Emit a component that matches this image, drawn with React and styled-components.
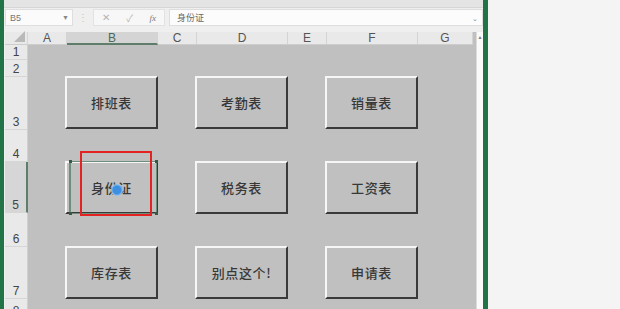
import React from "react";
import styled, { createGlobalStyle, css } from "styled-components";

const GlobalStyle = createGlobalStyle`
  html, body {
    margin: 0;
    padding: 0;
    background: #f4f4f4;
  }
`;

const Screen = styled.div`
  display: flex;
  width: 620px;
  height: 309px;
  overflow: hidden;
  background: #f4f4f4;
  font-family: "Liberation Sans", "Noto Sans CJK SC", sans-serif;
`;

const EdgeBar = styled.div`
  flex: none;
  width: ${(p) => p.$w}px;
  background: #227447;
`;

const Workbook = styled.div`
  flex: none;
  width: 479px;
  display: flex;
  flex-direction: column;
  overflow: hidden;
  background: #efefef;
`;

const TopStrip = styled.div`
  flex: none;
  height: 7px;
  background: #e4e4e4;
  border-bottom: 1px solid #d6d6d6;
`;

const FormulaBar = styled.div`
  flex: none;
  display: flex;
  align-items: stretch;
  height: 17px;
  margin: 1px 0 6px 1px;
  gap: 4px;
`;

const NameBox = styled.div`
  width: 59px;
  display: flex;
  align-items: center;
  justify-content: space-between;
  padding: 0 3px 0 4px;
  background: #fbfbfb;
  border: 1px solid #dedede;
  font-size: 9px;
  color: #777;
`;

const Caret = styled.span`
  font-size: 7px;
  color: #888;
`;

const Dots = styled.div`
  width: 12px;
  display: flex;
  align-items: center;
  justify-content: center;
  color: #c4c4c4;
  font-size: 10px;
`;

const ActionBox = styled.div`
  width: 70px;
  display: flex;
  align-items: center;
  justify-content: space-around;
  background: #f7f7f7;
  border: 1px solid #e2e2e2;
  color: #b4b4b4;
  font-size: 10px;
`;

const Fx = styled.span`
  font-family: "Liberation Serif", serif;
  font-style: italic;
  font-size: 9px;
  color: #777;
`;

const FormulaInput = styled.div`
  flex: 1;
  display: flex;
  align-items: center;
  justify-content: space-between;
  padding: 0 4px 0 7px;
  background: #fcfcfc;
  border: 1px solid #dedede;
  font-family: "Noto Sans CJK SC", sans-serif;
  font-size: 9px;
  color: #666;
`;

const SheetGrid = styled.div`
  flex: none;
  display: grid;
  margin-left: 1px;
  grid-template-columns: 23px 39px 91px 39px 91px 39px 91px 55px 10px;
  grid-template-rows: 13px 15px 17px 53px 32px 51px 34px 52px 20px;
  background: #c0c0c0;
`;

const Corner = styled.div`
  grid-column: 1;
  grid-row: 1;
  display: flex;
  align-items: flex-end;
  justify-content: flex-end;
  padding: 0 2px 2px 0;
  background: #e9e9e9;
  border-bottom: 1px solid #cdcdcd;
  border-right: 1px solid #d6d6d6;
`;

const ColHead = styled.div`
  grid-row: 1;
  grid-column: ${(p) => p.$col};
  display: flex;
  align-items: center;
  justify-content: center;
  font-size: 12px;
  color: #555;
  background: #e9e9e9;
  border-right: 1px solid #d4d4d4;
  border-bottom: 1px solid #cdcdcd;
  ${(p) =>
    p.$active &&
    css`
      background: #d4d4d4;
      color: #4a6b58;
      border-bottom: 2px solid #5e7d6b;
    `}
`;

const RowHead = styled.div`
  grid-column: 1;
  grid-row: ${(p) => p.$row};
  display: flex;
  align-items: flex-end;
  justify-content: center;
  font-size: 12px;
  line-height: 13px;
  color: #444;
  background: #e9e9e9;
  border-bottom: 1px solid #d6d6d6;
  border-right: 1px solid #cfcfcf;
  ${(p) =>
    p.$active &&
    css`
      background: #d6d6d6;
      border-right: 2px solid #5e7d6b;
    `}
`;

const ScrollTrack = styled.div`
  grid-column: 9;
  grid-row: 1 / -1;
  display: flex;
  justify-content: center;
  padding-top: 2px;
  margin-left: 3px;
  background: #fafafa;
  border-left: 1px solid #dcdcdc;
  font-size: 5px;
  color: #777;
`;

const ButtonSlot = styled.div`
  grid-column: ${(p) => p.$col};
  grid-row: ${(p) => p.$row};
  position: relative;
  margin: -1px 0 0 -2px;
  width: 93px;
  height: 53px;
`;

const SheetButton = styled.div`
  box-sizing: border-box;
  width: 100%;
  height: 100%;
  display: flex;
  align-items: center;
  justify-content: center;
  background: #c0c0c0;
  border-top: 2px solid #f6f6f6;
  border-left: 2px solid #f6f6f6;
  border-right: 2px solid #3a3a3a;
  border-bottom: 2px solid #3a3a3a;
  font-family: "Noto Sans CJK SC", sans-serif;
  font-size: 13px;
  font-weight: 500;
  color: #383838;
  letter-spacing: 0.6px;
`;

const SelectionFrame = styled.div`
  position: absolute;
  inset: 0 1px 0 4px;
  border: 1px solid #6b8f7a;
  border-left-width: 2px;
  pointer-events: none;
`;

const Handle = styled.span`
  position: absolute;
  width: 3px;
  height: 3px;
  background: #3b5546;
  ${(p) => (p.$top ? "top: -2px;" : "bottom: -2px;")}
  ${(p) => (p.$left ? "left: -2px;" : "right: -2px;")}
`;

const RedMark = styled.div`
  position: absolute;
  left: 15px;
  top: -10px;
  width: 68px;
  height: 61px;
  border: 2px solid #e42222;
`;

const Cursor = styled.div`
  position: absolute;
  left: 46px;
  top: 23px;
  width: 12px;
  height: 12px;
  border-radius: 50%;
  background: radial-gradient(circle, #3e8fe0 0 45%, #9cc9f2 70%, rgba(170, 210, 245, 0.4) 100%);
`;

const columns = ["A", "B", "C", "D", "E", "F", "G"];
const rows = ["1", "2", "3", "4", "5", "6", "7", "8"];

const buttons = [
  { label: "排班表", col: 3, row: 4 },
  { label: "考勤表", col: 5, row: 4 },
  { label: "销量表", col: 7, row: 4 },
  { label: "身份证", col: 3, row: 6, selected: true },
  { label: "税务表", col: 5, row: 6 },
  { label: "工资表", col: 7, row: 6 },
  { label: "库存表", col: 3, row: 8 },
  { label: "别点这个!", col: 5, row: 8 },
  { label: "申请表", col: 7, row: 8 },
];

export default function App() {
  return (
    <>
      <GlobalStyle />
      <Screen>
        <EdgeBar $w={4} />
        <Workbook>
          <TopStrip />
          <FormulaBar>
            <NameBox>
              B5 <Caret>▼</Caret>
            </NameBox>
            <Dots>⋮</Dots>
            <ActionBox>
              <span>✕</span>
              <span>✓</span>
              <Fx>fx</Fx>
            </ActionBox>
            <FormulaInput>
              身份证 <Caret>⌄</Caret>
            </FormulaInput>
          </FormulaBar>
          <SheetGrid>
            <Corner>
              <svg width="11" height="11" viewBox="0 0 11 11">
                <polygon points="11,0 11,11 0,11" fill="#b9b9b9" />
              </svg>
            </Corner>
            {columns.map((c, i) => (
              <ColHead key={c} $col={i + 2} $active={c === "B"}>
                {c}
              </ColHead>
            ))}
            {rows.map((r, i) => (
              <RowHead key={r} $row={i + 2} $active={r === "5"}>
                {r}
              </RowHead>
            ))}
            <ScrollTrack>▲</ScrollTrack>
            {buttons.map((b) => (
              <ButtonSlot key={b.label} $col={b.col} $row={b.row}>
                <SheetButton>{b.label}</SheetButton>
                {b.selected && (
                  <>
                    <SelectionFrame>
                      <Handle $top $left />
                      <Handle $top />
                      <Handle $left />
                      <Handle />
                    </SelectionFrame>
                    <RedMark />
                    <Cursor />
                  </>
                )}
              </ButtonSlot>
            ))}
          </SheetGrid>
        </Workbook>
        <EdgeBar $w={5} />
      </Screen>
    </>
  );
}
